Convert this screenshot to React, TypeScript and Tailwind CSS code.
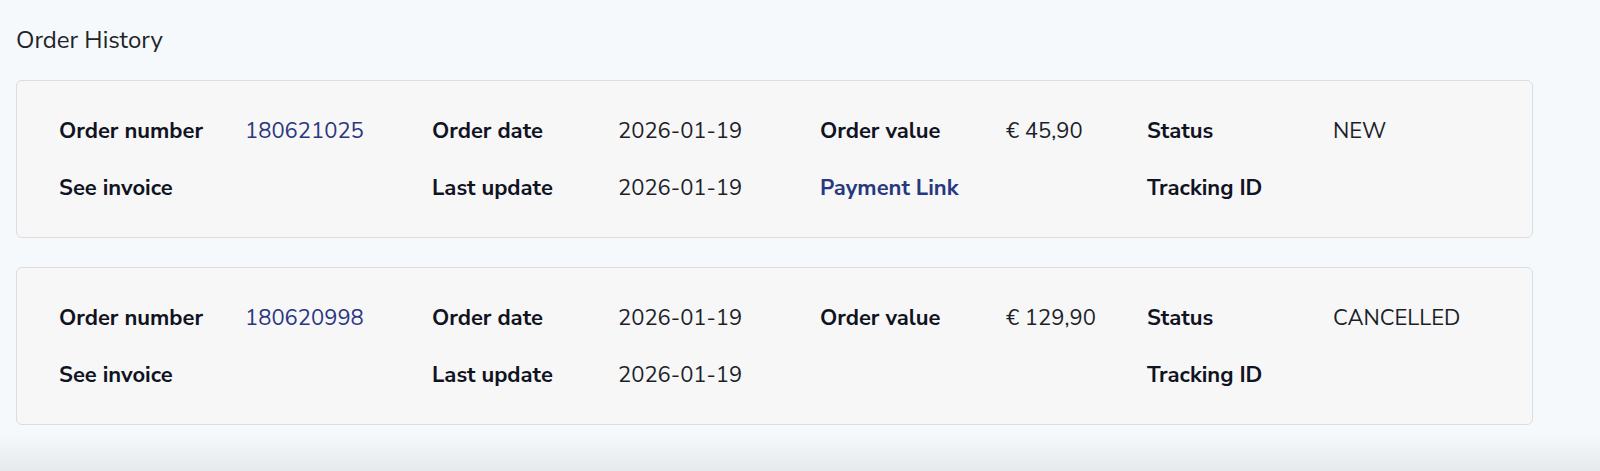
import React from "react"

type Order = {
  number: string
  date: string
  updated: string
  value: string
  status: string
  paymentLink?: boolean
}

const orders: Order[] = [
  { number: "180621025", date: "2026-01-19", updated: "2026-01-19", value: "€ 45,90", status: "NEW", paymentLink: true },
  { number: "180620998", date: "2026-01-19", updated: "2026-01-19", value: "€ 129,90", status: "CANCELLED" },
]

const label = "w-[186px] shrink-0 font-bold text-[#0f1322]"
const value = "shrink-0 text-[#1c1f2a]"

function OrderCard({ order }: { order: Order }) {
  return (
    <div className="rounded-md border border-[#dcdde0] bg-[#f7f7f7] pl-[42px] pt-[35px] pb-[34px] flex flex-col gap-[27px]">
      <div className="flex items-center h-[30px]">
        <span className={label}>Order number</span>
        <span className="w-[187px] shrink-0 text-[#2b3680]">{order.number}</span>
        <span className={label}>Order date</span>
        <span className={`w-[202px] ${value}`}>{order.date}</span>
        <span className={label}>Order value</span>
        <span className={`w-[141px] ${value}`}>{order.value}</span>
        <span className={label}>Status</span>
        <span className={value}>{order.status}</span>
      </div>
      <div className="flex items-center h-[30px]">
        <span className={label}>See invoice</span>
        <span className="w-[187px] shrink-0"></span>
        <span className={label}>Last update</span>
        <span className={`w-[202px] ${value}`}>{order.updated}</span>
        <span className="w-[186px] shrink-0 font-bold text-[#27387f]">{order.paymentLink ? "Payment Link" : ""}</span>
        <span className="w-[141px] shrink-0"></span>
        <span className={label}>Tracking ID</span>
      </div>
    </div>
  )
}

export default function App() {
  return (
    <div
      className="w-[1600px] h-[471px] overflow-hidden bg-[#f5f9fc] text-[22px] leading-[30px]"
      style={{ fontFamily: '"Nunito Sans", Lato, "Open Sans", sans-serif' }}
    >
      <div className="pl-4 pr-[67px]">
        <h1 className="pt-[25px] h-[80px] text-[24px] leading-[30px] text-[#222428] font-normal">Order History</h1>
        <div className="flex flex-col gap-[29px]">
          {orders.map((o) => (
            <OrderCard key={o.number} order={o} />
          ))}
        </div>
      </div>
      <div className="mt-[8px] h-[40px] bg-gradient-to-b from-[#f5f9fc] to-[#e6e9ec]"></div>
    </div>
  )
}
